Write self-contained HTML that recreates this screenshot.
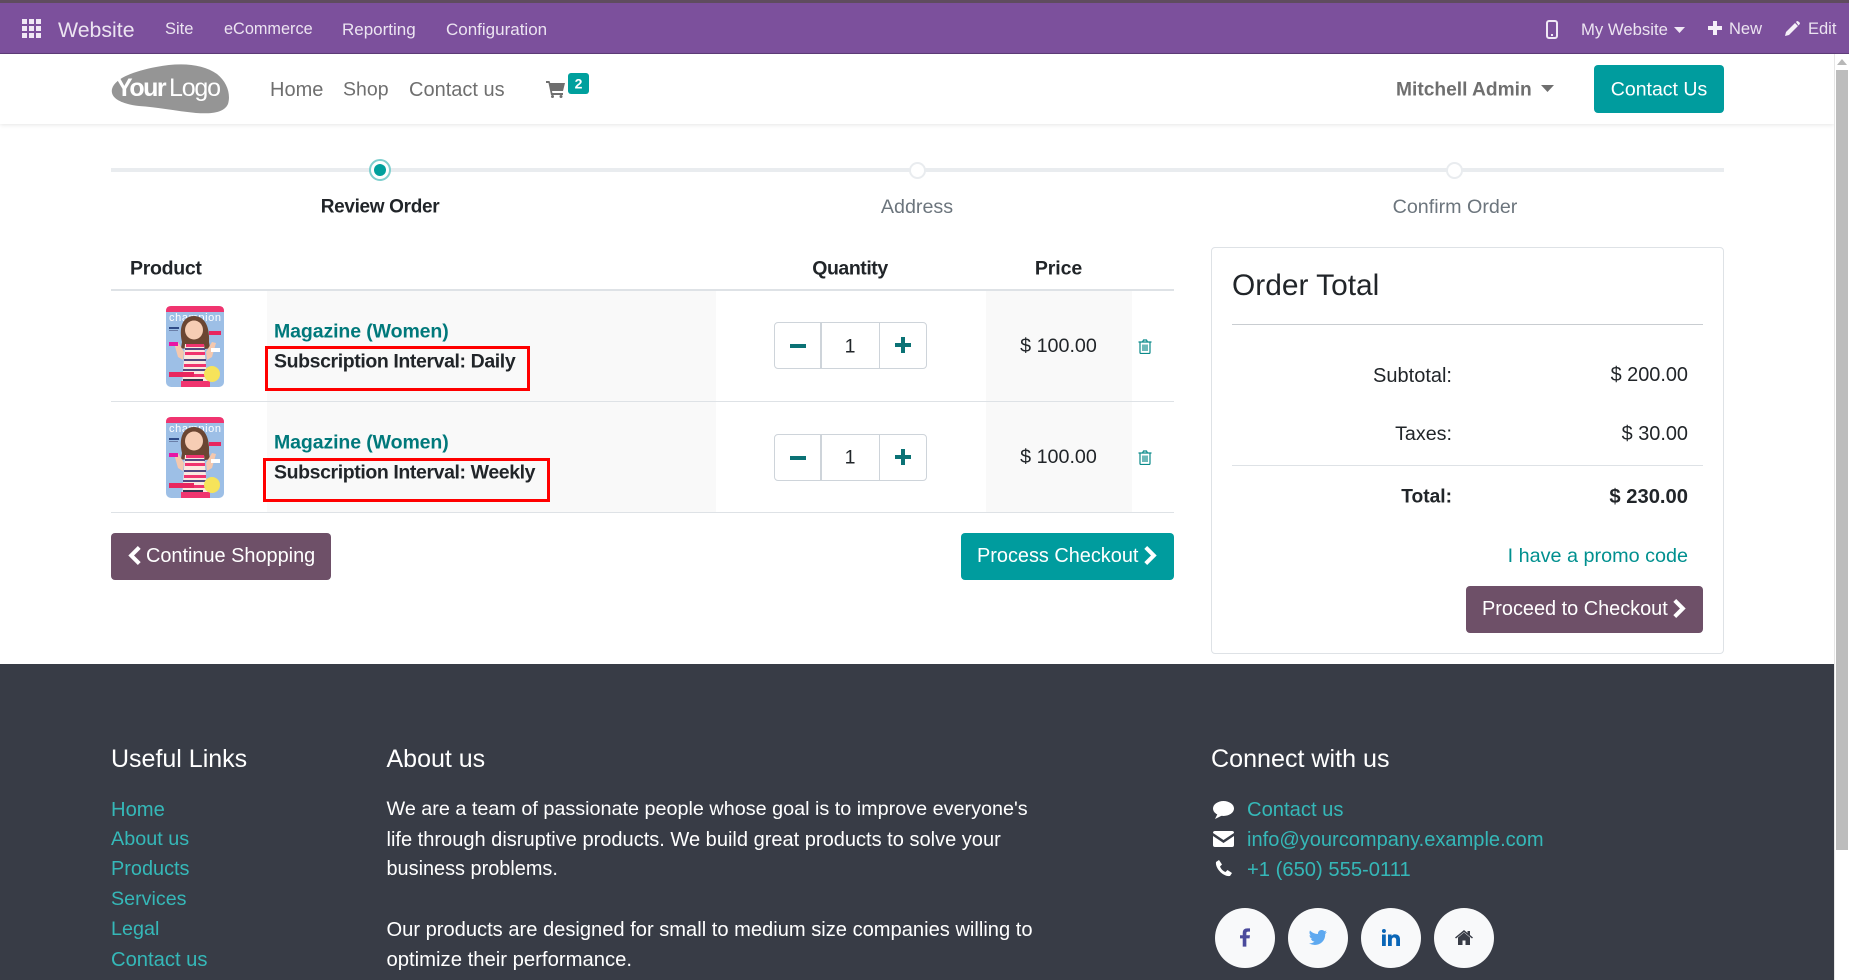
<!DOCTYPE html>
<html><head><meta charset="utf-8"><title>Shop</title>
<style>
*{box-sizing:border-box}
html,body{margin:0;padding:0;width:1849px;height:980px;overflow:hidden;background:#fff;font-family:"Liberation Sans",sans-serif;color:#212529}
.a{position:absolute}
.t{position:absolute;white-space:nowrap;line-height:1.2;transform:translateY(calc(-50% + 2px))}
.c{transform:translate(-50%,calc(-50% + 2px))}
.nav{color:#ece4f1;font-size:17px}
.hn{color:#6f6f6f;font-size:20px}
.b{font-weight:bold}
.fl{color:#35b8b8;font-size:20.2px}
.fw{color:#fff;font-size:20px}
.btn{position:absolute;border-radius:4px;color:#fff;font-size:20px}
.qty{position:absolute;left:774px;width:153px;height:47px;border:1px solid #ced4da;border-radius:4px;background:#fff}
.circ{position:absolute;width:60px;height:60px;border-radius:50%;background:#f8f9fa;top:908px}
</style></head><body>

<!-- top strip and bar -->
<div class="a" style="left:0;top:0;width:1849px;height:3px;background:#5f4c5e"></div>
<div class="a" style="left:0;top:3px;width:1849px;height:51px;background:#7c509c;border-bottom:1px solid #5f3d7a"></div>
<svg class="a" style="left:22px;top:19px" width="19" height="19" viewBox="0 0 19 19" fill="#f0e8f5"><rect x="0" y="0" width="5" height="5"/><rect x="7" y="0" width="5" height="5"/><rect x="14" y="0" width="5" height="5"/><rect x="0" y="7" width="5" height="5"/><rect x="7" y="7" width="5" height="5"/><rect x="14" y="7" width="5" height="5"/><rect x="0" y="14" width="5" height="5"/><rect x="7" y="14" width="5" height="5"/><rect x="14" y="14" width="5" height="5"/></svg>
<div class="t nav" style="left:58px;top:29px;font-size:21.3px">Website</div>
<div class="t nav" style="left:165px;top:28px;font-size:16.5px">Site</div>
<div class="t nav" style="left:224px;top:28px;font-size:16.3px">eCommerce</div>
<div class="t nav" style="left:342px;top:28px">Reporting</div>
<div class="t nav" style="left:446px;top:28px">Configuration</div>

<svg class="a" style="left:1546px;top:20px" width="12" height="19" viewBox="0 0 12 19"><rect x="1" y="1" width="10" height="17" rx="2" fill="none" stroke="#f0e8f5" stroke-width="2"/><rect x="5" y="14" width="2" height="2" fill="#f0e8f5"/></svg>
<div class="t nav" style="left:1581px;top:28px;font-size:16.7px">My Website</div>
<svg class="a" style="left:1674px;top:27px" width="11" height="6"><path d="M0 0h11L5.500 6z" fill="#f0e8f5"/></svg>
<svg class="a" style="left:1708px;top:21px" width="14" height="14"><path d="M5 0h4v5h5v4H9v5H5V9H0V5h5z" fill="#f5f0f8"/></svg>
<div class="t nav" style="left:1729px;top:28px;font-size:16.5px">New</div>
<svg class="a" style="left:1785px;top:21px" width="15" height="15" viewBox="0 0 15 15"><path d="M0 15l1-4L10 2l3 3-9 9zM11 1l1-1q1 0 2 1l1 1q0 1-1 2l-0.500 0.500z" fill="#f5f0f8"/></svg>
<div class="t nav" style="left:1808px;top:28px;font-size:16.5px">Edit</div>

<!-- header -->
<div class="a" style="left:0;top:54px;width:1834px;height:70px;background:#fff;box-shadow:0 1px 4px rgba(0,0,0,.1)"></div>
<svg class="a" style="left:111px;top:64px" width="120" height="50" viewBox="0 0 120 50">
<path d="M1 25C4 14 24 7 45 3C70-2 92 0 106 10C116 18 120 30 117 40C113 49 100 50 85 49C65 47 45 43 28 42C12 40-1 35 1 25Z" fill="#959595"/>
<text x="5" y="32" font-family="Liberation Sans" font-weight="bold" font-size="25" letter-spacing="-1.500" fill="#fff">Your</text>
<text x="58" y="32" font-family="Liberation Sans" font-size="25" textLength="52" fill="#fff">Logo</text></svg>
<div class="t hn" style="left:270px;top:88px">Home</div>
<div class="t hn" style="left:343px;top:88px;font-size:19.5px">Shop</div>
<div class="t hn" style="left:409px;top:88px">Contact us</div>
<svg class="a" style="left:546px;top:81px" width="19" height="17" viewBox="0 0 19 17"><path d="M0 0h3.500l.7 2H19l-2 8H6l.4 2H17v2H5L2.500 2H0z" fill="#6f6f6f"/><circle cx="6.500" cy="15.500" r="1.500" fill="#6f6f6f"/><circle cx="15" cy="15.500" r="1.500" fill="#6f6f6f"/></svg>
<div class="a" style="left:568px;top:73px;width:21px;height:21px;background:#00a09d;border-radius:3px"></div>
<div class="t c b" style="left:578.500px;top:81.500px;color:#fff;font-size:14px">2</div>
<div class="t hn b" style="left:1396px;top:88px;font-size:19.2px">Mitchell Admin</div>
<svg class="a" style="left:1541px;top:85px" width="13" height="7"><path d="M0 0h13L6.500 7z" fill="#6f6f6f"/></svg>
<div class="btn" style="left:1594px;top:65px;width:130px;height:48px;background:#009c9e"></div>
<div class="t c" style="left:1659px;top:88px;color:#fff;font-size:19.5px">Contact Us</div>

<!-- scrollbar -->
<div class="a" style="left:1834px;top:54px;width:15px;height:926px;background:#fff;border-left:1px solid #e6e6e6"></div>
<div class="a" style="left:1836px;top:70px;width:12px;height:780px;background:#bdbdbd"></div>
<svg class="a" style="left:1837px;top:59px" width="10" height="6"><path d="M0 6L5 0l5 6z" fill="#b8b8b8"/></svg>

<!-- wizard -->
<div class="a" style="left:111px;top:168px;width:1613px;height:4px;background:#e9ecef"></div>
<div class="a" style="left:369px;top:159px;width:22px;height:22px;border-radius:50%;background:#fff;border:2px solid #7fcfce"></div>
<div class="a" style="left:374px;top:164px;width:12px;height:12px;border-radius:50%;background:#00a09d"></div>
<div class="a" style="left:909px;top:162px;width:17px;height:17px;border-radius:50%;background:#fff;border:2px solid #e9ecef"></div>
<div class="a" style="left:1446px;top:162px;width:17px;height:17px;border-radius:50%;background:#fff;border:2px solid #e9ecef"></div>
<div class="t c b" style="left:380px;top:206px;font-size:19px;letter-spacing:-.33px">Review Order</div>
<div class="t c" style="left:917px;top:206px;font-size:19.7px;color:#6c757d">Address</div>
<div class="t c" style="left:1455px;top:206px;font-size:19.7px;color:#6c757d">Confirm Order</div>

<!-- table -->
<div class="t b" style="left:130px;top:267px;font-size:19.5px;letter-spacing:-.3px">Product</div>
<div class="t c b" style="left:850px;top:267px;font-size:19.5px;letter-spacing:-.45px">Quantity</div>
<div class="t c b" style="left:1058.500px;top:267px;font-size:19.5px;letter-spacing:-.1px">Price</div>
<div class="a" style="left:267px;top:291px;width:449px;height:221px;background:#f9f9f9"></div>
<div class="a" style="left:986px;top:291px;width:146px;height:221px;background:#f9f9f9"></div>
<div class="a" style="left:111px;top:289px;width:1063px;height:2px;background:#dee2e6"></div>
<div class="a" style="left:111px;top:401px;width:1063px;height:1px;background:#dee2e6"></div>
<div class="a" style="left:111px;top:512px;width:1063px;height:1px;background:#dee2e6"></div>

<!-- product images -->
<svg class="a" style="left:166px;top:306px" width="58" height="81" viewBox="0 0 58 81">
<rect width="58" height="81" rx="5" fill="#9dbfe6"/><path d="M0 5q0-5 5-5h48q5 0 5 5v1H0z" fill="#f0346f"/>
<text x="3" y="15" font-family="Liberation Sans" font-size="11" textLength="52" fill="#fff">champion</text>
<path d="M16 36C12 18 19 10 28 10S44 18 43 36L44 42C40 44 20 44 15 42z" fill="#6b4632"/><ellipse cx="28" cy="24" rx="9" ry="9.500" fill="#f6cdb4"/>
<path d="M19 38H38L42 81H16z" fill="#fbe9e0"/><path d="M20 38H38V41H20zM19 46H39V49H19zM18 58H40V61H18zM17 68H42V71H17z" fill="#f0346f"/><path d="M19 42H39V44H19zM18 53H40V55H18zM17 63H41V65H17z" fill="#54497f"/><path d="M15 75H44V81H15z" fill="#f0346f"/>
<path d="M8 37l4-1 6 10-1 8-5-3zM50 37l-4-1-6 10 1 8 5-3z" fill="#f4c8ae"/>
<rect x="3" y="21" width="10" height="2" fill="#2e4a86"/><rect x="3" y="24" width="9" height="1" fill="#6a7fa8"/><rect x="43" y="25" width="12" height="4" fill="#e8265f"/><rect x="3" y="36" width="9" height="4" fill="#e816a4"/><rect x="45" y="42" width="9" height="4" fill="#fff"/>
<rect x="3" y="66" width="25" height="5" fill="#e8265f"/><circle cx="46" cy="68" r="8" fill="#f6e35a"/><rect x="17" y="73" width="20" height="2" fill="#38334f"/></svg>
<svg class="a" style="left:166px;top:417px" width="58" height="81" viewBox="0 0 58 81">
<rect width="58" height="81" rx="5" fill="#9dbfe6"/><path d="M0 5q0-5 5-5h48q5 0 5 5v1H0z" fill="#f0346f"/>
<text x="3" y="15" font-family="Liberation Sans" font-size="11" textLength="52" fill="#fff">champion</text>
<path d="M16 36C12 18 19 10 28 10S44 18 43 36L44 42C40 44 20 44 15 42z" fill="#6b4632"/><ellipse cx="28" cy="24" rx="9" ry="9.500" fill="#f6cdb4"/>
<path d="M19 38H38L42 81H16z" fill="#fbe9e0"/><path d="M20 38H38V41H20zM19 46H39V49H19zM18 58H40V61H18zM17 68H42V71H17z" fill="#f0346f"/><path d="M19 42H39V44H19zM18 53H40V55H18zM17 63H41V65H17z" fill="#54497f"/><path d="M15 75H44V81H15z" fill="#f0346f"/>
<path d="M8 37l4-1 6 10-1 8-5-3zM50 37l-4-1-6 10 1 8 5-3z" fill="#f4c8ae"/>
<rect x="3" y="21" width="10" height="2" fill="#2e4a86"/><rect x="3" y="24" width="9" height="1" fill="#6a7fa8"/><rect x="43" y="25" width="12" height="4" fill="#e8265f"/><rect x="3" y="36" width="9" height="4" fill="#e816a4"/><rect x="45" y="42" width="9" height="4" fill="#fff"/>
<rect x="3" y="66" width="25" height="5" fill="#e8265f"/><circle cx="46" cy="68" r="8" fill="#f6e35a"/><rect x="17" y="73" width="20" height="2" fill="#38334f"/></svg>

<div class="t b" style="left:274px;top:330px;font-size:19.5px;letter-spacing:-.1px;color:#00797b">Magazine (Women)</div>
<div class="t b" style="left:274px;top:360px;font-size:19.5px;letter-spacing:-.4px;color:#212529">Subscription Interval: Daily</div>
<div class="a" style="left:265px;top:346px;width:265px;height:45px;border:3px solid #f00"></div>
<div class="t b" style="left:274px;top:441px;font-size:19.5px;letter-spacing:-.1px;color:#00797b">Magazine (Women)</div>
<div class="t b" style="left:274px;top:471px;font-size:19.5px;letter-spacing:-.4px;color:#212529">Subscription Interval: Weekly</div>
<div class="a" style="left:263px;top:458px;width:287px;height:44px;border:3px solid #f00"></div>

<!-- qty 1 -->
<div class="qty" style="top:322px"></div>
<div class="a" style="left:820px;top:322px;width:2px;height:47px;background:#ced4da"></div>
<div class="a" style="left:879px;top:322px;width:1px;height:47px;background:#ced4da"></div>
<svg class="a" style="left:790px;top:339px" width="16" height="14"><rect y="5" width="16" height="4" fill="#0b7275"/></svg>
<svg class="a" style="left:895px;top:337px" width="16" height="16"><path d="M6 0h4v6h6v4h-6v6H6v-6H0V6h6z" fill="#0b7275"/></svg>
<div class="t c" style="left:850px;top:345px;font-size:19.5px">1</div>
<div class="t c" style="left:1058.500px;top:345px;font-size:19.7px">$ 100.00</div>
<svg class="a" style="left:1138px;top:339px" width="14" height="15" viewBox="0 0 14 15" fill="none" stroke="#0b8a8a" stroke-width="1.200"><path d="M0.500 3h13M4.500 3l1-2h3l1 2M2 3v10.500q0 1 1 1h8q1 0 1-1V3M5 5.500v6.500M7 5.500v6.500M9 5.500v6.500"/></svg>

<!-- qty 2 -->
<div class="qty" style="top:434px"></div>
<div class="a" style="left:820px;top:434px;width:2px;height:47px;background:#ced4da"></div>
<div class="a" style="left:879px;top:434px;width:1px;height:47px;background:#ced4da"></div>
<svg class="a" style="left:790px;top:451px" width="16" height="14"><rect y="5" width="16" height="4" fill="#0b7275"/></svg>
<svg class="a" style="left:895px;top:449px" width="16" height="16"><path d="M6 0h4v6h6v4h-6v6H6v-6H0V6h6z" fill="#0b7275"/></svg>
<div class="t c" style="left:850px;top:456px;font-size:19.5px">1</div>
<div class="t c" style="left:1058.500px;top:456px;font-size:19.7px">$ 100.00</div>
<svg class="a" style="left:1138px;top:450px" width="14" height="15" viewBox="0 0 14 15" fill="none" stroke="#0b8a8a" stroke-width="1.200"><path d="M0.500 3h13M4.500 3l1-2h3l1 2M2 3v10.500q0 1 1 1h8q1 0 1-1V3M5 5.500v6.500M7 5.500v6.500M9 5.500v6.500"/></svg>

<!-- buttons -->
<div class="btn" style="left:111px;top:533px;width:220px;height:47px;background:#6e5068"></div>
<svg class="a" style="left:128px;top:546px" width="13" height="19" viewBox="0 0 13 20"><path d="M10 0l3 3-7 7 7 7-3 3L0 10z" fill="#fff"/></svg>
<div class="t" style="left:146px;top:555px;color:#fff;font-size:19.9px">Continue Shopping</div>
<div class="btn" style="left:961px;top:533px;width:213px;height:47px;background:#009c9e"></div>
<div class="t" style="left:977px;top:555px;color:#fff;font-size:19.9px">Process Checkout</div>
<svg class="a" style="left:1144px;top:546px" width="13" height="19" viewBox="0 0 13 20"><path d="M3 0l10 10-10 10-3-3 7-7-7-7z" fill="#fff"/></svg>

<!-- order total -->
<div class="a" style="left:1211px;top:247px;width:513px;height:407px;border:1px solid #dee2e6;border-radius:4px"></div>
<div class="t" style="left:1232px;top:284px;font-size:29.9px">Order Total</div>
<div class="a" style="left:1232px;top:324px;width:471px;height:1px;background:#c9cdd1"></div>
<div class="t" style="right:397px;top:374px;font-size:20px">Subtotal:</div>
<div class="t" style="right:161px;top:374px;font-size:19.9px">$ 200.00</div>
<div class="t" style="right:397px;top:433px;font-size:19.7px">Taxes:</div>
<div class="t" style="right:161px;top:433px;font-size:19.9px">$ 30.00</div>
<div class="a" style="left:1232px;top:465px;width:471px;height:1px;background:#dee2e6"></div>
<div class="t b" style="right:397px;top:495px;font-size:19.2px">Total:</div>
<div class="t b" style="right:161px;top:495px;font-size:20.2px">$ 230.00</div>
<div class="t" style="right:161px;top:555px;font-size:19.8px;color:#00908f">I have a promo code</div>
<div class="btn" style="left:1466px;top:586px;width:237px;height:47px;background:#6e5068"></div>
<div class="t" style="left:1482px;top:608px;color:#fff;font-size:19.9px">Proceed to Checkout</div>
<svg class="a" style="left:1673px;top:599px" width="13" height="19" viewBox="0 0 13 20"><path d="M3 0l10 10-10 10-3-3 7-7-7-7z" fill="#fff"/></svg>

<!-- footer -->
<div class="a" style="left:0;top:664px;width:1834px;height:316px;background:#383c46"></div>
<div class="t fw" style="left:111px;top:757px;font-size:25px">Useful Links</div>
<div class="t fl" style="left:111px;top:808px">Home</div>
<div class="t fl" style="left:111px;top:838px;font-size:19.8px">About us</div>
<div class="t fl" style="left:111px;top:868px;font-size:19.9px">Products</div>
<div class="t fl" style="left:111px;top:898px;font-size:19.7px">Services</div>
<div class="t fl" style="left:111px;top:928px;font-size:19.8px">Legal</div>
<div class="t fl" style="left:111px;top:958px">Contact us</div>

<div class="t fw" style="left:386.500px;top:757px;font-size:25px">About us</div>
<div class="t fw" style="left:386.500px;top:808px;font-size:19.8px">We are a team of passionate people whose goal is to improve everyone's</div>
<div class="t fw" style="left:386.500px;top:838px;font-size:20.04px">life through disruptive products. We build great products to solve your</div>
<div class="t fw" style="left:386.500px;top:868px;font-size:19.9px">business problems.</div>
<div class="t fw" style="left:386.500px;top:928px;font-size:20.12px">Our products are designed for small to medium size companies willing to</div>
<div class="t fw" style="left:386.500px;top:958px;font-size:20.28px">optimize their performance.</div>

<div class="t fw" style="left:1211px;top:757px;font-size:25.1px">Connect with us</div>
<svg class="a" style="left:1213px;top:801px" width="21" height="18" viewBox="0 0 21 18"><ellipse cx="10.500" cy="7.500" rx="10.500" ry="7.500" fill="#fff"/><path d="M5 12L2 18 10 14z" fill="#fff"/></svg>
<svg class="a" style="left:1213px;top:831px" width="21" height="16" viewBox="0 0 21 16"><path d="M0 2q0-2 2-2h17q2 0 2 2L10.500 9zM0 5l10.500 7L21 5v9q0 2-2 2H2q-2 0-2-2z" fill="#fff"/></svg>
<svg class="a" style="left:1215px;top:860px" width="17" height="17" viewBox="0 0 17 17"><path d="M4 0L1 2C0 8 8 17 15 16L17 13L12.500 10L10.500 12C8 11 6 9 5 6.500L7 4.500z" fill="#fff"/></svg>
<div class="t fl" style="left:1247px;top:808px">Contact us</div>
<div class="t fl" style="left:1247px;top:838px;font-size:20.07px">info@yourcompany.example.com</div>
<div class="t fl" style="left:1247px;top:868px">+1 (650) 555-0111</div>

<div class="circ" style="left:1215px"></div>
<div class="circ" style="left:1288px"></div>
<div class="circ" style="left:1361px"></div>
<div class="circ" style="left:1434px"></div>
<svg class="a" style="left:1240px;top:928px" width="10" height="19" viewBox="0 0 11 20"><path d="M3 20V11H0V7.500h3V5q0-5 5-5h3v3.500H9Q7 3.500 7 5v2.500h4L10.500 11H7v9z" fill="#4a4a9c"/></svg>
<svg class="a" style="left:1309px;top:930px" width="18" height="15" viewBox="0 0 18 15"><path d="M18 2l-2 .6L17.500 .5 15.500 1.300C13 -1.500 8.500 .5 9 4 5.500 4 3 2.500 1 .5 0 2.500.5 4.500 2 5.500L.5 5.200C.5 7 2 8.500 3.500 9L2 9C2.500 10.500 4 11.500 5.500 11.500 4 13 2 13.500 0 13.300 7 17.500 16.500 13.500 16.200 4z" fill="#5ea9f0"/></svg>
<svg class="a" style="left:1382px;top:929px" width="18" height="17" viewBox="0 0 18 17"><path d="M0 5.500h3.800V17H0zM6 5.500h3.600V7C11 5 13 5 14.500 5.500 17 6 18 8 18 10.500V17H14.200V11C14.200 9.500 13.500 8.500 12 8.500S9.800 9.500 9.800 11V17H6z" fill="#0a66b7"/><circle cx="1.900" cy="2" r="2" fill="#0a66b7"/></svg>
<svg class="a" style="left:1455px;top:930px" width="18" height="15" viewBox="0 0 18 15"><path d="M9 2.500L3 7.500V15H7.500V10.500H10.500V15H15V7.500z" fill="#383c46"/><path d="M0 7.500L9 0l3.500 3V1h2.500v4L18 7.500 17 8.500 9 2 1 8.500z" fill="#383c46"/></svg>
</body></html>
